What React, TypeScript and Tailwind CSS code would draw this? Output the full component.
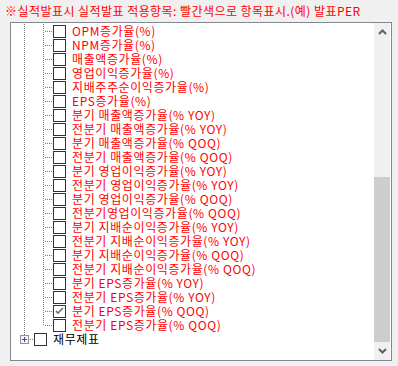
import React from "react";

const items: { label: string; checked?: boolean }[] = [
  { label: "OPM증가율(%)" },
  { label: "NPM증가율(%)" },
  { label: "매출액증가율(%)" },
  { label: "영업이익증가율(%)" },
  { label: "지배주주순이익증가율(%)" },
  { label: "EPS증가율(%)" },
  { label: "분기 매출액증가율(% YOY)" },
  { label: "전분기 매출액증가율(% YOY)" },
  { label: "분기 매출액증가율(% QOQ)" },
  { label: "전분기 매출액증가율(% QOQ)" },
  { label: "분기 영업이익증가율(% YOY)" },
  { label: "전분기 영업이익증가율(% YOY)" },
  { label: "분기 영업이익증가율(% QOQ)" },
  { label: "전분기영업이익증가율(% QOQ)" },
  { label: "분기 지배순이익증가율(% YOY)" },
  { label: "전분기 지배순이익증가율(% YOY)" },
  { label: "분기 지배순이익증가율(% QOQ)" },
  { label: "전분기 지배순이익증가율(% QOQ)" },
  { label: "분기 EPS증가율(% YOY)" },
  { label: "전분기 EPS증가율(% YOY)" },
  { label: "분기 EPS증가율(% QOQ)", checked: true },
  { label: "전분기 EPS증가율(% QOQ)" },
];

const DOT = "#7a7a7a";

function Checkbox({ checked }: { checked?: boolean }) {
  return (
    <div className="w-[13px] h-[13px] border border-[#333333] bg-white shrink-0 mt-[1px] flex items-center justify-center">
      {checked && (
        <svg width="11" height="11" viewBox="0 0 11 11">
          <path d="M2 5 L4 7 L9 2" stroke="#6d6d6d" strokeWidth="1.6" fill="none" />
        </svg>
      )}
    </div>
  );
}

function ChildLines({ last }: { last: boolean }) {
  return (
    <svg width="42" height="14" className="shrink-0" shapeRendering="crispEdges">
      <line x1="13.5" y1="0" x2="13.5" y2="14" stroke={DOT} strokeDasharray="1 1" />
      <line x1="32.5" y1="0" x2="32.5" y2={last ? 8 : 14} stroke={DOT} strokeDasharray="1 1" />
      <line x1="34" y1="7.5" x2="42" y2="7.5" stroke={DOT} strokeDasharray="1 1" />
    </svg>
  );
}

function ParentLines() {
  return (
    <svg width="23" height="14" className="shrink-0" shapeRendering="crispEdges">
      <line x1="13.5" y1="0" x2="13.5" y2="3" stroke={DOT} strokeDasharray="1 1" />
      <rect x="9.5" y="3.5" width="8" height="8" fill="#f4f4f4" stroke="#919191" />
      <line x1="11" y1="7.5" x2="16" y2="7.5" stroke="#2a4fb0" />
      <line x1="13.5" y1="5" x2="13.5" y2="10" stroke="#2a4fb0" />
      <line x1="19" y1="7.5" x2="23" y2="7.5" stroke={DOT} strokeDasharray="1 1" />
    </svg>
  );
}

function Chevron({ up }: { up?: boolean }) {
  return (
    <svg width="9" height="6" viewBox="0 0 9 6">
      <path
        d={up ? "M1 5 L4.5 1.5 L8 5" : "M1 1 L4.5 4.5 L8 1"}
        stroke="#606060"
        strokeWidth="2"
        fill="none"
      />
    </svg>
  );
}

export default function App() {
  const font = { fontFamily: '"Noto Sans CJK KR", "Noto Sans", sans-serif' };
  return (
    <div className="w-[398px] h-[366px] bg-[#f0f0f0] overflow-hidden" style={font}>
      <div className="pl-[5px] pt-[3px] h-[22px] text-[12px] leading-[16px] tracking-[0.45px] text-[#ff0000] whitespace-nowrap">
        ※실적발표시 실적발표 적용항목: 빨간색으로 항목표시.(예) 발표PER
      </div>
      <div className="ml-[10px] w-[382px] h-[339px] border border-[#828790] bg-white flex">
        <div className="flex-1 overflow-hidden pt-[1px] text-[12px] leading-[14px] tracking-[0.6px]">
          {items.map((it, i) => (
            <div key={i} className="h-[14px] flex items-start">
              <ChildLines last={i === items.length - 1} />
              <Checkbox checked={it.checked} />
              <span className="ml-[6px] text-[#ff0000] whitespace-nowrap">{it.label}</span>
            </div>
          ))}
          <div className="h-[14px] flex items-start">
            <ParentLines />
            <Checkbox />
            <span className="ml-[6px] text-black whitespace-nowrap">재무제표</span>
          </div>
        </div>
        <div className="w-[16px] mr-[1px] bg-[#f0f0f0] flex flex-col">
          <div className="h-[17px] flex items-center justify-center">
            <Chevron up />
          </div>
          <div className="h-[137px]" />
          <div className="h-[165px] bg-[#cdcdcd]" />
          <div className="flex-1 flex items-center justify-center">
            <Chevron />
          </div>
        </div>
      </div>
    </div>
  );
}
